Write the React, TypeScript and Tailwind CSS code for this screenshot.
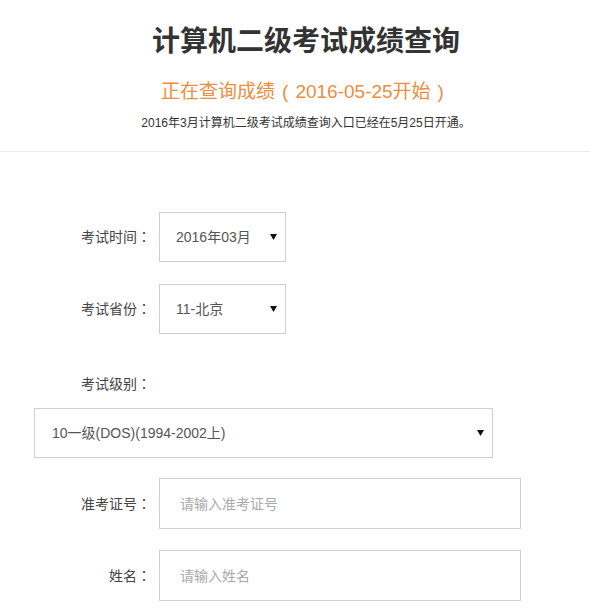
import React from 'react';

const font = { fontFamily: '"Liberation Sans", "Noto Sans CJK SC", sans-serif' };
// fullwidth colon centred in its box, as in the reference
const punct = { fontFamily: '"Noto Sans CJK TC", sans-serif' };

const Arrow: React.FC = () => (
  <svg width="7" height="6" viewBox="0 0 7 6" className="shrink-0">
    <path d="M0 0 H7 L3.5 6 Z" fill="#111" />
  </svg>
);

const Label: React.FC<{ text: string }> = ({ text }) => (
  <div className="w-[151px] shrink-0 text-right text-[14px] text-[#444]">
    {text}
    <span style={punct}>：</span>
  </div>
);

const FakeSelect: React.FC<{ value: string; className: string; padLeft: string }> = ({ value, className, padLeft }) => (
  <div
    className={`flex items-center justify-between border border-[#cfcfcf] bg-white pr-[8px] text-[14px] text-[#555] ${padLeft} ${className}`}
  >
    <span>{value}</span>
    <Arrow />
  </div>
);

export default function App() {
  return (
    <div className="min-h-[612px] w-[590px] overflow-hidden bg-white" style={font}>
      {/* Header */}
      <div className="h-[152px] border-b border-[#ebebeb] pl-[22px] text-center">
        <h1 className="pt-[22px] text-[28px] font-bold leading-[40px] text-[#333]">计算机二级考试成绩查询</h1>
        <p className="mt-[17px] text-[19px] leading-[26px] text-[#f08c3c]">
          正在查询成绩<span className="mx-[7px]">(</span>2016-05-25开始<span className="mx-[7px]">)</span>
        </p>
        <p className="mt-[8px] text-[12px] leading-[20px] text-[#333]">2016年3月计算机二级考试成绩查询入口已经在5月25日开通。</p>
      </div>

      {/* Form */}
      <div className="flex flex-col pt-[60px]">
        <div className="flex items-center">
          <Label text="考试时间" />
          <FakeSelect value="2016年03月" className="ml-[8px] h-[50px] w-[127px]" padLeft="pl-[16px]" />
        </div>

        <div className="mt-[22px] flex items-center">
          <Label text="考试省份" />
          <FakeSelect value="11-北京" className="ml-[8px] h-[50px] w-[127px]" padLeft="pl-[16px]" />
        </div>

        <div className="mt-[40px] flex h-[20px] items-center">
          <Label text="考试级别" />
        </div>

        <FakeSelect value="10一级(DOS)(1994-2002上)" className="ml-[34px] mt-[14px] h-[50px] w-[459px]" padLeft="pl-[17px]" />

        <div className="mt-[20px] flex items-center">
          <Label text="准考证号" />
          <input
            type="text"
            placeholder="请输入准考证号"
            className="ml-[8px] h-[51px] w-[362px] border border-[#cfcfcf] pl-[20px] text-[14px] text-[#555] outline-none placeholder:text-[#aaa]"
          />
        </div>

        <div className="mt-[21px] flex items-center">
          <Label text="姓名" />
          <input
            type="text"
            placeholder="请输入姓名"
            className="ml-[8px] h-[51px] w-[362px] border border-[#cfcfcf] pl-[20px] text-[14px] text-[#555] outline-none placeholder:text-[#aaa]"
          />
        </div>
      </div>
    </div>
  );
}
